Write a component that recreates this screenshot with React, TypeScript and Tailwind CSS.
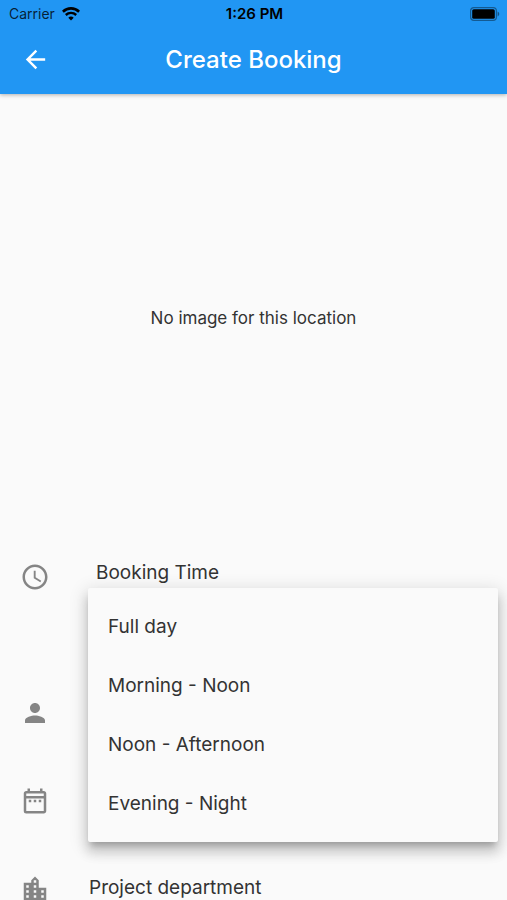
import type { ReactNode } from "react";
import {
  MdAccessTime,
  MdArrowBack,
  MdLocationCity,
  MdOutlineDateRange,
  MdPerson,
} from "react-icons/md";

const bookingTimes = ["Full day", "Morning - Noon", "Noon - Afternoon", "Evening - Night"];

function WifiIcon() {
  return (
    <svg className="h-[14px] w-[18px]" viewBox="0 0 18 14" fill="none" stroke="#000" aria-hidden="true">
      <path d="M.9 4.7C5.5.3 12.5.3 17.1 4.7" strokeWidth="2.6" />
      <path d="M3.8 8c3-2.8 7.4-2.8 10.4 0" strokeWidth="2.4" />
      <path d="M6.3 10.7c1.6-1.5 3.8-1.5 5.4 0L9 13.6z" fill="#000" stroke="none" />
    </svg>
  );
}

function BatteryIcon() {
  return (
    <svg className="h-[14px] w-[30px]" viewBox="0 0 30 14" aria-hidden="true">
      <rect x="0.6" y="0.6" width="25.8" height="12.8" rx="3.4" fill="none" stroke="#000" strokeOpacity="0.4" strokeWidth="1.2" />
      <rect x="2.2" y="2.2" width="22.6" height="9.6" rx="1.6" fill="#000" />
      <path d="M27.6 4.6c2.2.8 2.2 4 0 4.8z" fill="#000" fillOpacity="0.45" />
    </svg>
  );
}

function StatusBar() {
  return (
    <div className="grid h-[26px] grid-cols-3 items-center pt-px pr-[7px] pl-[9px] text-sm text-black">
      <div className="flex items-center gap-[7px] text-black/80">
        <span>Carrier</span>
        <WifiIcon />
      </div>
      <span className="text-center text-[15px] font-semibold">1:26 PM</span>
      <div className="flex justify-end">
        <BatteryIcon />
      </div>
    </div>
  );
}

function FormRow({ icon, children }: { icon: ReactNode; children?: ReactNode }) {
  return (
    <div className="flex h-[88px] items-center pl-5">
      <span className="flex w-[69px] shrink-0 text-[#858585]">{icon}</span>
      {children}
    </div>
  );
}

export default function App() {
  return (
    <div className="flex h-screen flex-col overflow-hidden bg-[#fafafa] font-['Inter',sans-serif] text-[#333]">
      <header className="relative shrink-0 bg-[#2196f3] pb-px shadow-[0_1px_4px_rgba(0,0,0,0.3)]">
        <StatusBar />
        <div className="grid h-[67px] grid-cols-[70px_1fr_70px] items-center">
          <button type="button" aria-label="Back" className="flex justify-center text-white">
            <MdArrowBack size={29} />
          </button>
          <h1 className="text-center text-2xl font-medium text-white">Create Booking</h1>
        </div>
      </header>

      <main className="flex-1">
        <div className="flex h-[448px] items-center justify-center pt-[2px] text-[17px]">
          <p>No image for this location</p>
        </div>

        <form>
          <div className="relative flex h-[127px] pl-5">
            <span className="w-[76px] shrink-0 pt-5 text-[#858585]">
              <MdAccessTime size={30} />
            </span>
            <span id="booking-time" className="pt-[17px] text-[19px] leading-7">
              Booking Time
            </span>
            <div
              role="listbox"
              aria-labelledby="booking-time"
              className="absolute top-[46px] right-[9px] left-[88px] z-10 rounded-xs bg-[#fafafa] pt-[10px] pb-2 shadow-[0_6px_6px_-3px_rgba(0,0,0,0.2),0_10px_12px_1px_rgba(0,0,0,0.14),0_4px_17px_3px_rgba(0,0,0,0.12)]"
            >
              {bookingTimes.map((time) => (
                <button
                  key={time}
                  type="button"
                  role="option"
                  aria-selected={false}
                  className="flex h-[59px] w-full items-center px-5 text-left text-[19px]"
                >
                  {time}
                </button>
              ))}
            </div>
          </div>
          <FormRow icon={<MdPerson size={30} />} />
          <FormRow icon={<MdOutlineDateRange size={30} />} />
          <FormRow icon={<MdLocationCity size={30} />}>
            <span className="pb-[2px] text-[19px]">Project department</span>
          </FormRow>
        </form>
      </main>
    </div>
  );
}
